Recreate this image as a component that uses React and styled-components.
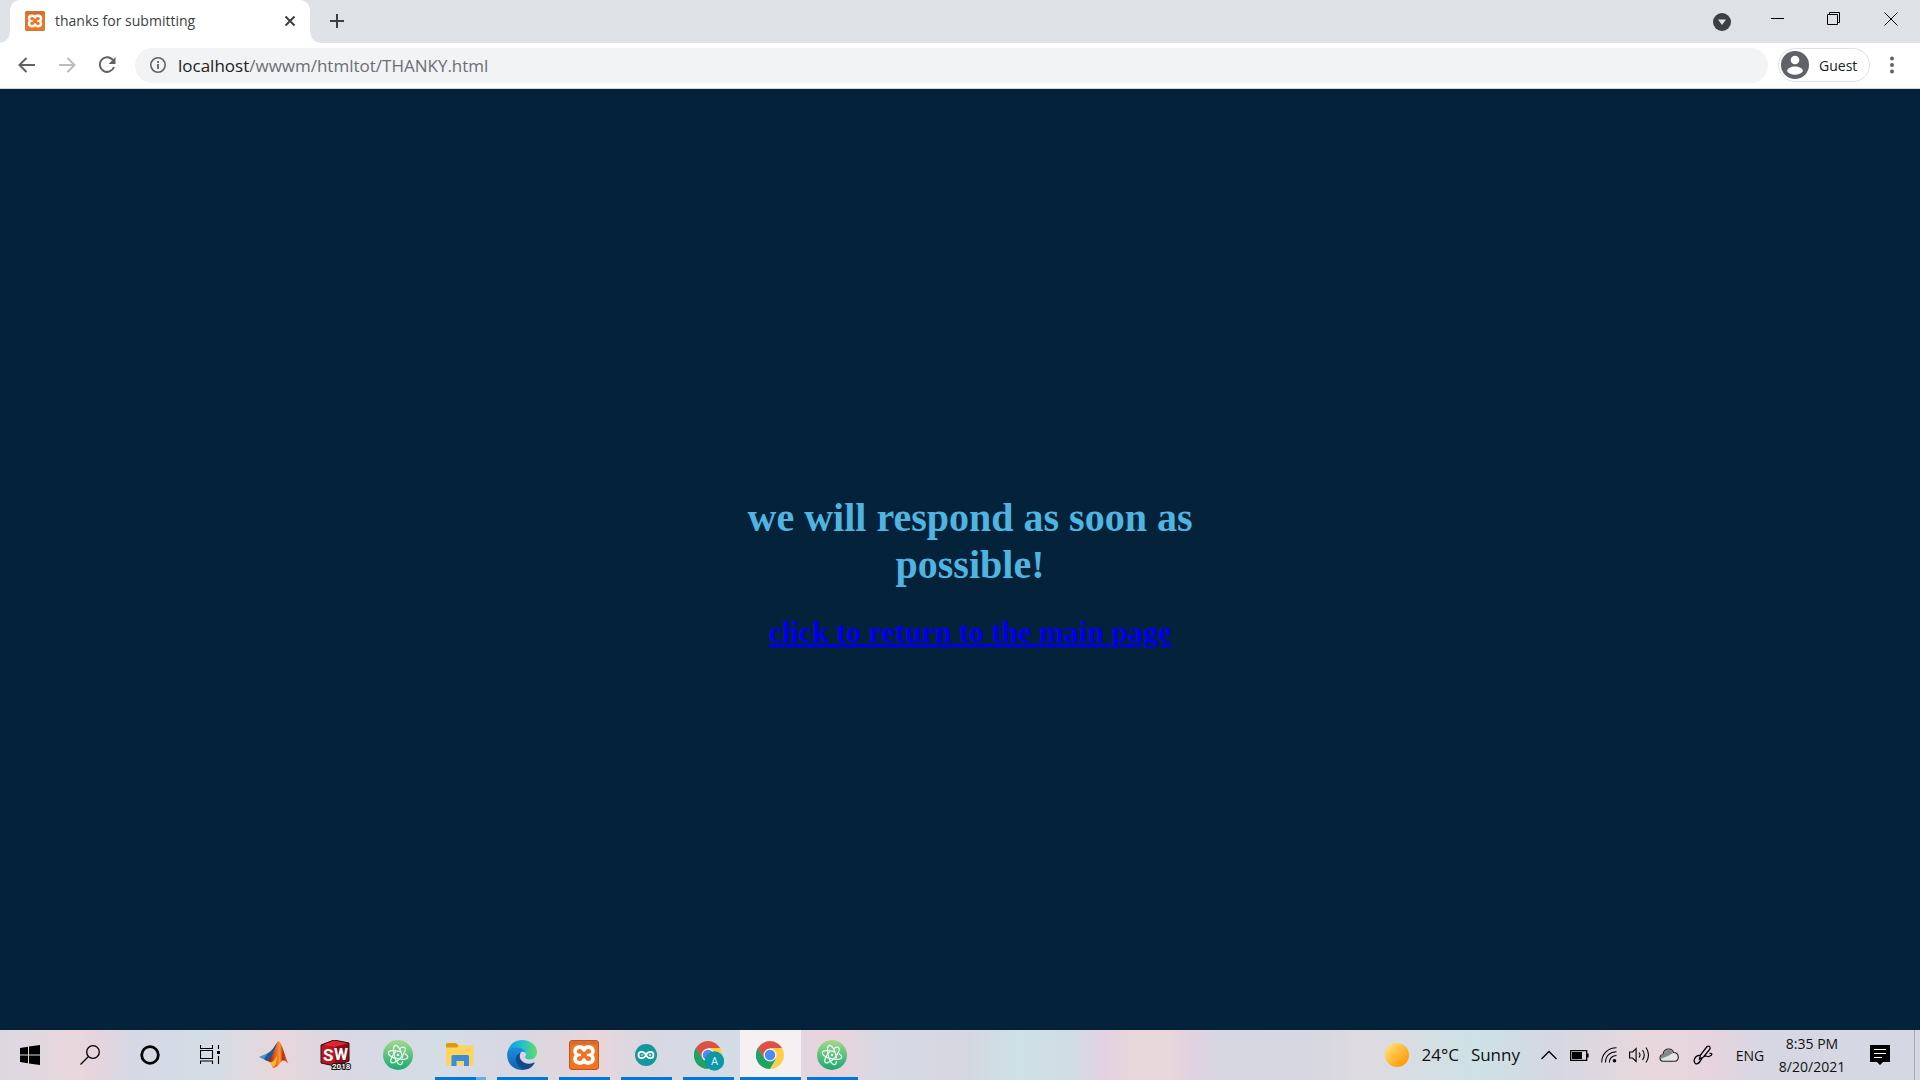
import React from 'react';
import styled, { createGlobalStyle } from 'styled-components';

const Global = createGlobalStyle`
  *, *::before, *::after { box-sizing: border-box; }
  body { margin: 0; overflow: hidden; }
  button { border: 0; padding: 0; background: none; font: inherit; color: inherit; }
  svg { display: block; flex: none; }
`;

const Screen = styled.div`
  display: flex;
  flex-direction: column;
  height: 100vh;
  font-family: 'Open Sans', 'Noto Sans', sans-serif;
`;

/* ---------- browser ---------- */

const TabStrip = styled.header`
  display: flex;
  align-items: stretch;
  height: 43px;
  padding-left: 10px;
  background: #dee1e6;
`;

const Tab = styled.div`
  position: relative;
  display: flex;
  align-items: center;
  width: 300px;
  padding: 0 12px 2px 15px;
  gap: 10px;
  border-radius: 10px 10px 0 0;
  background: #fff;
  color: #3c4043;
  font-size: 14px;

  &::before, &::after {
    content: '';
    position: absolute;
    bottom: 0;
    width: 10px;
    height: 10px;
  }
  &::before { right: 100%; background: radial-gradient(circle at 0 0, transparent 9px, #fff 10px); }
  &::after { left: 100%; background: radial-gradient(circle at 100% 0, transparent 9px, #fff 10px); }
`;

const TabTitle = styled.span`
  flex: 1;
  line-height: 20px;
  white-space: nowrap;
`;

const IconButton = styled.button`
  display: grid;
  place-items: center;
  width: ${(p) => p.$w || 40}px;
  height: ${(p) => p.$h || 34}px;
`;

const NewTab = styled(IconButton)`
  margin-left: 7px;
  height: 42px;
`;

const WindowControls = styled.div`
  display: flex;
  margin-left: auto;
`;

const Toolbar = styled.div`
  display: flex;
  align-items: center;
  height: 46px;
  padding: 0 6px 1px 7px;
  border-bottom: 1px solid #d3d5d9;
  background: #fff;
`;

const Address = styled.div`
  display: flex;
  flex: 1;
  align-items: center;
  height: 35px;
  margin: 0 10px 0 8px;
  padding: 0 15px;
  gap: 12px;
  border-radius: 18px;
  background: #f1f3f4;
  font-size: 17px;
  color: #6b6f74;
`;

const UrlText = styled.a`
  padding-top: 1px;
  line-height: 24px;
  color: inherit;
  text-decoration: none;
`;

const Host = styled.span`
  color: #202124;
`;

const Profile = styled.button`
  display: flex;
  align-items: center;
  width: 92px;
  height: 34px;
  gap: 10px;
  padding-left: 2px;
  border: 1px solid #dfe1e5;
  border-radius: 17px;
  color: #202124;
  font-size: 14px;
`;

const Page = styled.main`
  display: flex;
  flex: 1;
  flex-direction: column;
  align-items: center;
  justify-content: center;
  padding: 24px 0 0 20px;
  background: #04223a;
  font-family: 'Liberation Serif', 'Times New Roman', serif;
  text-align: center;
`;

const Message = styled.h1`
  max-width: 500px;
  margin: 0 0 27px;
  color: #50b4e0;
  font-size: 40px;
  line-height: 47px;
`;

const Return = styled.a`
  color: #0000ee;
  font-size: 30px;
  font-weight: 700;
  line-height: 34px;
`;

/* ---------- taskbar ---------- */

const Taskbar = styled.footer`
  display: flex;
  height: 50px;
  background: linear-gradient(90deg,
    #dcd8e1 0%, #e8d7dc 4%, #e6d4df 5%, #d5d9e5 7%, #d4dde6 11%, #e8d6dc 14.5%, #d8d8e3 18%,
    #d4dde6 23%, #d8d7e2 27%, #e8d6db 31%, #d8d8e3 34%, #d3dce5 38%, #ead3dc 43.5%, #d6dae5 46%,
    #d6d6e0 50%, #cde1e6 53%, #d2dce5 56%, #e3d1e2 57.5%, #e7d7da 59%, #e7d6da 61%, #e2d2e2 62%,
    #d6d6e1 63.5%, #d6d7e1 68%, #dedae0 71%, #cde1e6 77%, #d6d7e3 81%,
    #e8d8dc 86%, #e6d4df 89%, #d7d7e4 92%, #d4d7e2 100%);
  color: #111;
`;

const TaskGroup = styled.nav`
  display: flex;
  gap: ${(p) => p.$gap || 0}px;
  padding-right: 4px;
`;

const TaskButton = styled.button`
  display: grid;
  place-items: center;
  position: relative;
  width: ${(p) => p.$w || 61}px;
  padding-right: ${(p) => (p.$w ? 0 : 1)}px;
  background: ${(p) => (p.$active ? '#f5f1f3' : 'none')};

  &::after {
    content: '';
    display: ${(p) => (p.$open ? 'block' : 'none')};
    position: absolute;
    bottom: 0;
    left: ${(p) => (p.$active ? 0 : 5)}px;
    right: ${(p) => (p.$active ? 0 : 5)}px;
    height: 3px;
    background: ${(p) => (p.$stacked ? 'linear-gradient(90deg, #0078d7 41px, #66aee7 41px)' : '#0078d7')};
  }
`;

const Tray = styled.div`
  display: flex;
  align-items: center;
  margin-left: auto;
`;

const Weather = styled.button`
  display: flex;
  align-items: center;
  gap: 12px;
  margin-right: 14px;
  font-size: 17px;
  line-height: 24px;
`;

const TrayButton = styled.button`
  display: grid;
  place-items: center;
  width: ${(p) => p.$w || 30}px;
  height: 50px;
`;

const Language = styled.button`
  width: 56px;
  height: 50px;
  font-size: 14px;
`;

const Clock = styled.button`
  display: flex;
  flex-direction: column;
  align-items: center;
  width: 68px;
  font-size: 14px;
  line-height: 23px;
`;

const ShowDesktop = styled.button`
  width: 6px;
  height: 50px;
  border-left: 1px solid #a9abb5;
`;

/* ---------- drawings ---------- */

const Xampp = ({ size }) => (
  <svg width={size} height={size} viewBox="0 0 30 30">
    <rect x=".5" y=".5" width="29" height="29" rx="2.500" fill="#f07422" stroke="#b9541a" />
    <path d="M2 1.500h26v3H2z" fill="#c96a35" opacity=".7" />
    <path d="M15 10C14 6 6 6 6 11.200C6 13 7 14.200 8.200 15C7 15.800 6 17 6 18.800C6 24 14 24 15 20C16 24 24 24 24 18.800C24 17 23 15.800 21.800 15C23 14.200 24 13 24 11.200C24 6 16 6 15 10z" fill="none" stroke="#fff" strokeWidth="3.600" strokeLinejoin="round" />
    <path d="M9 15h2M19 15h2" stroke="#fff" strokeWidth="2.600" strokeLinecap="round" />
  </svg>
);

const Atom = () => (
  <svg width="30" height="30" viewBox="0 0 30 30">
    <defs><linearGradient id="atom" x2="0" y2="1"><stop stopColor="#a4d98c" /><stop offset="1" stopColor="#18a973" /></linearGradient></defs>
    <circle cx="15" cy="15" r="15" fill="url(#atom)" />
    <g fill="none" stroke="#f2fbf2" strokeWidth="1.200">
      <ellipse cx="15" cy="15" rx="10" ry="3.800" transform="rotate(14 15 15)" strokeDasharray="36 4" />
      <ellipse cx="15" cy="15" rx="10" ry="3.800" transform="rotate(74 15 15)" strokeDasharray="38 3" />
      <ellipse cx="15" cy="15" rx="10" ry="3.800" transform="rotate(-48 15 15)" strokeDasharray="35 5" />
    </g>
    <circle cx="15" cy="15" r="1.300" fill="#fff" />
  </svg>
);

const Chrome = ({ account }) => (
  <svg width="32" height="32" viewBox="0 0 32 32">
    <g transform="translate(2 2)">
      <path d="M14 14L1.880 7A14 14 0 0 1 26.120 7L14 7z" fill="#dd5144" />
      <path d="M14 7H26.120A14 14 0 0 1 14 28L20.060 17.500z" fill="#ffcd46" />
      <path d="M1.880 7A14 14 0 0 0 14 28L20.060 17.500L7.940 17.500z" fill="#1da462" />
      <path d="M1.880 7L7.940 17.500L14 14V7z" fill="#dd5144" />
      <path d="M1.880 7L7.940 17.500L14 21L11 27.700A14 14 0 0 1 1.880 7z" fill="#1da462" />
      <circle cx="14" cy="14" r="6.500" fill="#f1f3f6" />
      <circle cx="14" cy="14" r="5.200" fill="#4c8bf5" />
    </g>
    {account && (
      <g>
        <circle cx="22.500" cy="22" r="9.700" fill="#0d97a7" />
        <text x="22.500" y="26" textAnchor="middle" fontSize="11" fill="#d8f4f5" fontFamily="Roboto, sans-serif">A</text>
      </g>
    )}
  </svg>
);

const Matlab = () => (
  <svg width="30" height="30" viewBox="0 0 30 30">
    <defs><linearGradient id="ml"><stop stopColor="#6b1a12" /><stop offset=".35" stopColor="#e8501c" /><stop offset=".6" stopColor="#f79a2a" /><stop offset=".75" stopColor="#b02c16" /><stop offset="1" stopColor="#ee7a4c" /></linearGradient></defs>
    <path d="M0 17L9 13L14 9L18 4L12 20L8 21z" fill="#4593cf" />
    <path d="M9 13c4-1 6-7 10.500-12L12 19L8 21L5 19z" fill="#28578d" />
    <path d="M20 1c3 3 6 15 9.500 23c-3-3-5-5-7.500-2c-2 2-3 5-8 6c-1-4-3-7-6-7c5-2 6-8 8-12c1.500-4 2-7 4-8z" fill="url(#ml)" />
    <path d="M14 28c-.5-3-2-5-4-6c4 1 5-2 8-6c-1 6 0 8-4 12z" fill="#fbb829" />
  </svg>
);

const SolidWorks = () => (
  <svg width="32" height="30" viewBox="0 0 32 30">
    <path d="M1 5L14 0L29 3V21L15 26L1 23z" fill="#8e0e18" />
    <path d="M1 5L14 0L29 3L15 7z" fill="#e0262f" />
    <path d="M1 5L15 7V26L1 23z" fill="#ba1622" />
    <path d="M15 7L29 3V21L15 26z" fill="#86101a" />
    <path d="M1 5L14 0L29 3V21L15 26L1 23z" fill="none" stroke="#3a0b10" />
    <g fontWeight="700" fill="#fff" fontFamily="Roboto, sans-serif">
      <text x="3" y="21" fontSize="17">S</text>
      <text x="14" y="20" fontSize="16">W</text>
      <text x="12" y="29" fontSize="8" stroke="#111" strokeWidth="2" paintOrder="stroke">2018</text>
    </g>
  </svg>
);

const Folder = () => (
  <svg width="28" height="24" viewBox="0 0 28 24">
    <path d="M0 1.500Q0 0 1.500 0H10l2.500 2.500V5H0z" fill="#dd9b08" />
    <path d="M0 4.500h11l2-2h13q1.500 0 1.500 1.500v17q0 1.500-1.500 1.500H1.500Q0 22.500 0 21z" fill="#ffd35c" />
    <path d="M5.500 13.500Q5.500 12 7 12h14.500q1.500 0 1.500 1.500V23h-5v-5h-7.500v5h-5z" fill="#3b8cdc" />
  </svg>
);

const Edge = () => (
  <svg width="30" height="30" viewBox="0 0 30 30">
    <defs>
      <linearGradient id="e1"><stop stopColor="#1599df" /><stop offset=".5" stopColor="#28bdd2" /><stop offset="1" stopColor="#62df5c" /></linearGradient>
      <linearGradient id="e2" x2="0" y2="1"><stop stopColor="#1b8fdb" /><stop offset="1" stopColor="#1060b8" /></linearGradient>
    </defs>
    <path d="M.5 13C1.500 5 8 0 15 0c9 0 15 6 15 12c0 5-3.500 7.500-7 7.500c-3 0-5-1-5-2.200c0-.8 1-1.200 1-3C19 11 15.500 9 11.500 9C5 9 1 12 .5 13z" fill="url(#e1)" />
    <path d="M.3 13C1 9 5 7.300 10 7.600c5 .2 8.500 3 9 6.200c-1-2-3-2.300-5-1.600c-3 1-5 4-4.500 8c.6 4 4 8 8.500 9.500C8 31.500-1 24 .3 13z" fill="url(#e2)" />
    <path d="M14 12.200c-4 1.500-6 5-5 9c1.200 5 6 8.500 10 8.300c4-.7 7-3.500 8.500-6.300c.3-.6-.2-.9-.7-.6c-7 3.500-14.500-1-14-7c.1-1.400.6-2.600 1.200-3.400z" fill="#114a8b" />
  </svg>
);

const Arduino = () => (
  <svg width="22" height="22" viewBox="0 0 22 22">
    <circle cx="11" cy="11" r="11" fill="#12989d" />
    <path d="M11 11C9 6.500 3.500 7 3.500 11s5.500 4.500 7.500 0s7.500-4 7.500 0s-5.500 4.500-7.500 0z" fill="none" stroke="#fff" strokeWidth="1.800" />
    <path d="M5.800 11h2.500M13.800 11h2.500M15 9.800v2.400" stroke="#fff" strokeWidth=".9" />
  </svg>
);

const line = { fill: 'none', stroke: '#000', strokeWidth: 1.3 };

export default function App() {
  return (
    <Screen>
      <Global />
      <TabStrip>
        <Tab>
          <Xampp size={20} />
          <TabTitle>thanks for submitting</TabTitle>
          <IconButton $w={16} $h={20} aria-label="Close tab">
            <svg width="12" height="12" viewBox="0 0 12 12"><path d="M1.500 1.500l9 9M10.500 1.500l-9 9" stroke="#3c4043" strokeWidth="2" /></svg>
          </IconButton>
        </Tab>
        <NewTab aria-label="New tab">
          <svg width="16" height="16" viewBox="0 0 16 16"><path d="M8 1v14M1 8h14" stroke="#3c4043" strokeWidth="2" /></svg>
        </NewTab>
        <WindowControls>
          <IconButton $w={56} $h={43} aria-label="Search tabs">
            <svg width="18" height="18" viewBox="0 0 18 18"><circle cx="9" cy="9" r="9" fill="#3c4043" /><path d="M5 6.500h8L9 12z" fill="#dee1e6" /></svg>
          </IconButton>
          <IconButton $w={54} $h={37} aria-label="Minimize">
            <svg width="13" height="13" viewBox="0 0 13 13"><path d="M0 6.500h13" {...line} strokeWidth="1" /></svg>
          </IconButton>
          <IconButton $w={58} $h={37} aria-label="Restore">
            <svg width="13" height="13" viewBox="0 0 13 13"><path d="M.5 2.500h10v10H.5zM2.500 2.500v-2h10v10h-2" {...line} strokeWidth="1" /></svg>
          </IconButton>
          <IconButton $w={58} $h={37} aria-label="Close">
            <svg width="14" height="14" viewBox="0 0 14 14"><path d="M.5 .5l13 13M13.500 .5l-13 13" {...line} strokeWidth="1" /></svg>
          </IconButton>
        </WindowControls>
      </TabStrip>
      <Toolbar>
        <IconButton aria-label="Back">
          <svg width="18" height="16" viewBox="0 0 18 16"><path d="M17 8H2M8.500 1L1.500 8l7 7" fill="none" stroke="#5f6368" strokeWidth="2" /></svg>
        </IconButton>
        <IconButton aria-label="Forward">
          <svg width="18" height="16" viewBox="0 0 18 16"><path d="M1 8h15M9.500 1l7 7l-7 7" fill="none" stroke="#babcbe" strokeWidth="2" /></svg>
        </IconButton>
        <IconButton aria-label="Reload">
          <svg width="18" height="18" viewBox="0 0 18 18"><path d="M15 4.200A7.300 7.300 0 1 0 16 11" fill="none" stroke="#5f6368" strokeWidth="2" /><path d="M17.500 1v7h-7z" fill="#5f6368" /></svg>
        </IconButton>
        <Address>
          <svg width="16" height="16" viewBox="0 0 16 16"><circle cx="8" cy="8" r="7.200" fill="none" stroke="#5f6368" strokeWidth="1.600" /><path d="M8 7v5M8 4v2" stroke="#5f6368" strokeWidth="1.800" /></svg>
          <UrlText href="#"><Host>localhost</Host>/wwwm/htmltot/THANKY.html</UrlText>
        </Address>
        <Profile>
          <svg width="28" height="28" viewBox="0 0 28 28"><circle cx="14" cy="14" r="14" fill="#5f6368" /><circle cx="14" cy="9" r="4.300" fill="#fff" /><path d="M6 20c1-6 15-6 16 0c-3 5-13 5-16 0z" fill="#fff" /></svg>
          Guest
        </Profile>
        <IconButton $w={44} aria-label="Menu">
          <svg width="4" height="18" viewBox="0 0 4 18"><g fill="#5f6368"><circle cx="2" cy="2.500" r="2" /><circle cx="2" cy="9" r="2" /><circle cx="2" cy="15.500" r="2" /></g></svg>
        </IconButton>
      </Toolbar>
      <Page>
        <Message>we will respond as soon as possible!</Message>
        <Return href="#">click to return to the main page</Return>
      </Page>
      <Taskbar>
        <TaskGroup>
          <TaskButton $w={60} aria-label="Start">
            <svg width="20" height="20" viewBox="0 0 20 20"><path d="M0 3l8-1.200v7.700H0zM9 1.600L20 0v9.500H9zM0 10.500h8v7.700L0 17zM9 10.500h11V20L9 18.400z" /></svg>
          </TaskButton>
          <TaskButton $w={60} aria-label="Search">
            <svg width="20" height="20" viewBox="0 0 20 20"><circle cx="13" cy="7" r="6.300" {...line} /><path d="M8.500 11.500L.5 19.500" {...line} /></svg>
          </TaskButton>
          <TaskButton $w={60} aria-label="Cortana">
            <svg width="20" height="20" viewBox="0 0 20 20"><circle cx="10" cy="10" r="8.300" fill="none" stroke="#000" strokeWidth="2.800" /></svg>
          </TaskButton>
          <TaskButton $w={60} aria-label="Task view">
            <svg width="20" height="20" viewBox="0 0 20 20"><path d="M.5 0v3.500h12V0M.5 5.500h12v8H.5zM.5 19v-3h12v3M18.500 0v4M18.500 11v8" {...line} strokeWidth="1.100" /><path d="M17 6h3v3h-3z" /></svg>
          </TaskButton>
        </TaskGroup>
        <TaskGroup $gap={1}>
          <TaskButton aria-label="MATLAB"><Matlab /></TaskButton>
          <TaskButton aria-label="SolidWorks"><SolidWorks /></TaskButton>
          <TaskButton aria-label="Atom"><Atom /></TaskButton>
          <TaskButton $open $stacked aria-label="Files"><Folder /></TaskButton>
          <TaskButton $open aria-label="Edge"><Edge /></TaskButton>
          <TaskButton $open aria-label="XAMPP"><Xampp size={30} /></TaskButton>
          <TaskButton $open aria-label="Arduino"><Arduino /></TaskButton>
          <TaskButton $open aria-label="Chrome, account A"><Chrome account /></TaskButton>
          <TaskButton $open $active aria-label="Chrome"><Chrome /></TaskButton>
          <TaskButton $open aria-label="Atom window"><Atom /></TaskButton>
        </TaskGroup>
        <Tray>
          <Weather>
            <svg width="24" height="24" viewBox="0 0 24 24"><defs><linearGradient id="sun" x2="1" y2="1"><stop offset=".1" stopColor="#ffe072" /><stop offset=".9" stopColor="#ff9500" /></linearGradient></defs><circle cx="12" cy="12" r="12" fill="url(#sun)" /></svg>
            <span>24°C</span>
            <span>Sunny</span>
          </Weather>
          <TrayButton aria-label="Show hidden icons">
            <svg width="16" height="10" viewBox="0 0 16 10"><path d="M.5 9L8 1.500L15.500 9" {...line} /></svg>
          </TrayButton>
          <TrayButton aria-label="Battery">
            <svg width="19" height="11" viewBox="0 0 19 11"><path d="M.7 .7h16v9.600H.7zM18 3.500v4" {...line} /><path d="M2 2h10v7H2z" /></svg>
          </TrayButton>
          <TrayButton aria-label="Network">
            <svg width="16" height="16" viewBox="0 0 16 16"><path d="M.7 15.500C.7 7 7 .7 15.500 .7M4.500 15.500C4.500 9 9 4.700 15.500 4.700M8.300 15.500c0-4 3-7 7.200-7" {...line} strokeWidth="1.100" /><circle cx="13.500" cy="13.700" r="1.800" /></svg>
          </TrayButton>
          <TrayButton aria-label="Volume">
            <svg width="21" height="18" viewBox="0 0 21 18"><path d="M.6 6h3l3.500-3.500v13L3.600 12h-3zM10 6.500q2 2.500 0 5M13.500 4q3.500 5 0 10M17 1.500q5 7.500 0 15" {...line} strokeWidth="1.100" /></svg>
          </TrayButton>
          <TrayButton aria-label="OneDrive">
            <svg width="20" height="14" viewBox="0 0 20 14"><path d="M4 13.300C0 13 0 7 4 6.500C5-.5 13-.5 14.500 4.500c6 0 6.500 8.500 1 8.800z" fill="#e4e6e6" stroke="#222" strokeWidth="1.100" /><path d="M1.500 11C1 8 3 6.500 4.500 6.500C6 1 12 0 14 5L9 8z" fill="#858888" /></svg>
          </TrayButton>
          <TrayButton $w={38} aria-label="Pen">
            <svg width="20" height="20" viewBox="0 0 20 20"><path d="M6.500 14L7.500 10L14 1.500Q17.500 0 17 4L10.500 12zM7 10.500C2 10 -1 17 3 18.800C7 20 7.500 13 11 11.500C13 10 14 12 16 11.500C20 10 19.500 8 16.500 8.500" {...line} /></svg>
          </TrayButton>
          <Language>ENG</Language>
          <Clock><span>8:35 PM</span><span>8/20/2021</span></Clock>
          <TrayButton $w={68} aria-label="Notifications">
            <svg width="20" height="20" viewBox="0 0 20 20"><path d="M0 0h20v17h-7l-3 3l-3-3H0z" /><path d="M4 4.500h12M4 8.500h12M4 12.500h8" stroke="#fff" /></svg>
          </TrayButton>
          <ShowDesktop aria-label="Show desktop" />
        </Tray>
      </Taskbar>
    </Screen>
  );
}
